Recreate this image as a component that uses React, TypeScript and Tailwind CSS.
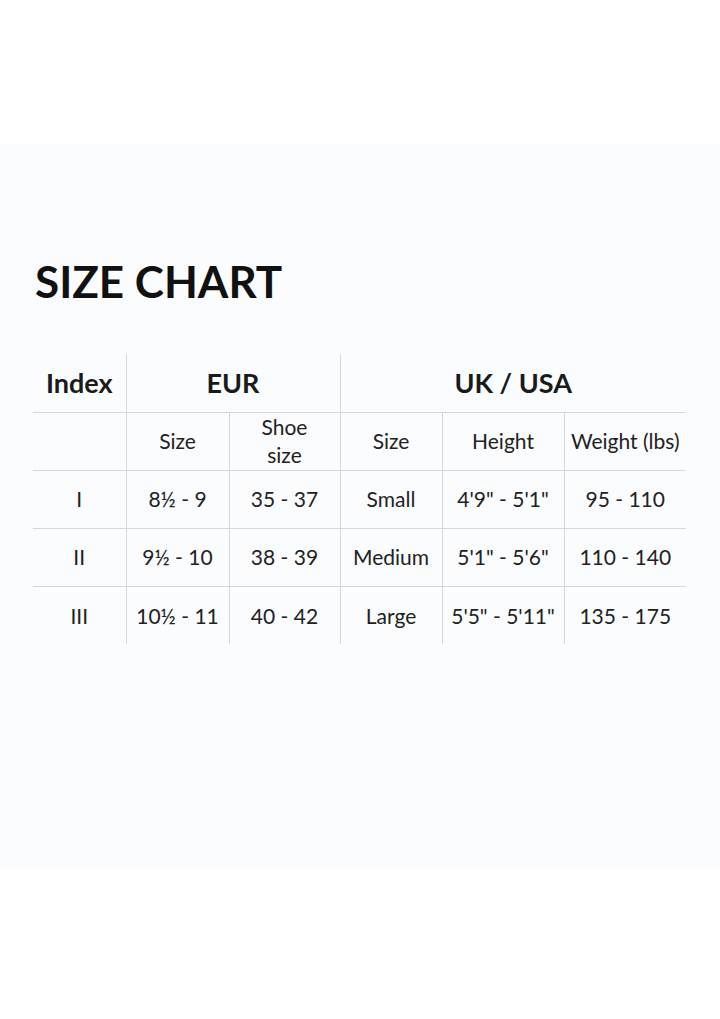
import React from "react";

const rows = [
  ["I", "8½ - 9", "35 - 37", "Small", "4'9\" - 5'1\"", "95 - 110"],
  ["II", "9½ - 10", "38 - 39", "Medium", "5'1\" - 5'6\"", "110 - 140"],
  ["III", "10½ - 11", "40 - 42", "Large", "5'5\" - 5'11\"", "135 - 175"],
];

export default function App() {
  const line = "border-[#d6d6dc]";
  return (
    <div className="w-[720px] h-[1019px] bg-white text-[#1a1a1a] font-['Lato',sans-serif]">
      <div className="h-[144px]" />
      <div className="h-[724px] bg-[#fbfcfd] pt-[111px]">
        <h1 className="ml-[35px] text-[44px] leading-[52px] font-bold text-[#111]">SIZE CHART</h1>
        <table className="ml-[33px] mt-[47px] border-collapse table-fixed w-[653px] text-center">
          <colgroup>
            <col className="w-[93px]" />
            <col className="w-[103px]" />
            <col className="w-[111px]" />
            <col className="w-[102px]" />
            <col className="w-[122px]" />
            <col className="w-[122px]" />
          </colgroup>
          <tbody>
            <tr className={`h-[58px] border-b ${line}`}>
              <td className={`border-r ${line} text-[27px] font-bold`}>Index</td>
              <td colSpan={2} className={`border-r ${line} text-[27px] font-bold`}>EUR</td>
              <td colSpan={3} className="text-[27px] font-bold">UK / USA</td>
            </tr>
            <tr className={`h-[58px] border-b ${line} text-[21px] font-normal text-[#222]`}>
              <td className={`border-r ${line}`}></td>
              <td className={`border-r ${line}`}>Size</td>
              <td className={`border-r ${line} leading-[28px]`}>Shoe<br />size</td>
              <td className={`border-r ${line}`}>Size</td>
              <td className={`border-r ${line}`}>Height</td>
              <td className="whitespace-nowrap">Weight (lbs)</td>
            </tr>
            {rows.map((r, i) => (
              <tr key={i} className={`h-[58px] text-[21px] font-normal text-[#222] ${i < rows.length - 1 ? `border-b ${line}` : ""}`}>
                {r.map((c, j) => (
                  <td key={j} className={`${j < r.length - 1 ? `border-r ${line}` : ""} whitespace-nowrap`}>{c}</td>
                ))}
              </tr>
            ))}
          </tbody>
        </table>
      </div>
    </div>
  );
}
